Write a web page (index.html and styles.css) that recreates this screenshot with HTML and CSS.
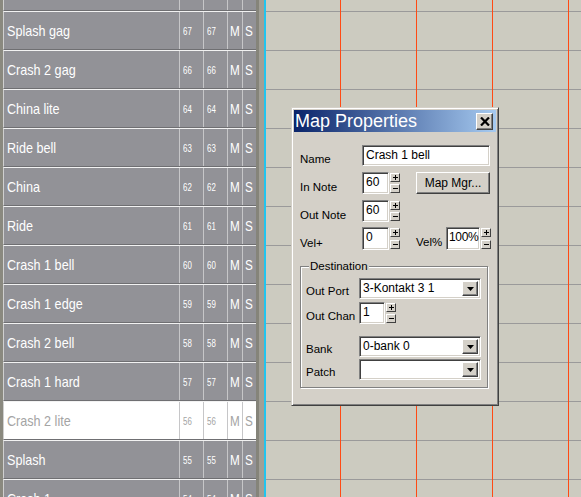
FILE: index.html
```html
<!DOCTYPE html>
<html>
<head>
<meta charset="utf-8">
<link rel="stylesheet" href="styles.css">
</head>
<body>
<div class="screen">
  <div class="edge"></div>
  <div class="list">
    <div class="row"><span class="c name"></span><span class="c num"></span><span class="c num"></span><span class="c ms"></span><span class="c ms"></span></div>
    <div class="row"><span class="c name"><b class="t">Splash gag</b></span><span class="c num"><b class="t">67</b></span><span class="c num"><b class="t">67</b></span><span class="c ms"><b class="t">M</b></span><span class="c ms"><b class="t">S</b></span></div>
    <div class="row"><span class="c name"><b class="t">Crash 2 gag</b></span><span class="c num"><b class="t">66</b></span><span class="c num"><b class="t">66</b></span><span class="c ms"><b class="t">M</b></span><span class="c ms"><b class="t">S</b></span></div>
    <div class="row"><span class="c name"><b class="t">China lite</b></span><span class="c num"><b class="t">64</b></span><span class="c num"><b class="t">64</b></span><span class="c ms"><b class="t">M</b></span><span class="c ms"><b class="t">S</b></span></div>
    <div class="row"><span class="c name"><b class="t">Ride bell</b></span><span class="c num"><b class="t">63</b></span><span class="c num"><b class="t">63</b></span><span class="c ms"><b class="t">M</b></span><span class="c ms"><b class="t">S</b></span></div>
    <div class="row"><span class="c name"><b class="t">China</b></span><span class="c num"><b class="t">62</b></span><span class="c num"><b class="t">62</b></span><span class="c ms"><b class="t">M</b></span><span class="c ms"><b class="t">S</b></span></div>
    <div class="row"><span class="c name"><b class="t">Ride</b></span><span class="c num"><b class="t">61</b></span><span class="c num"><b class="t">61</b></span><span class="c ms"><b class="t">M</b></span><span class="c ms"><b class="t">S</b></span></div>
    <div class="row"><span class="c name"><b class="t">Crash 1 bell</b></span><span class="c num"><b class="t">60</b></span><span class="c num"><b class="t">60</b></span><span class="c ms"><b class="t">M</b></span><span class="c ms"><b class="t">S</b></span></div>
    <div class="row"><span class="c name"><b class="t">Crash 1 edge</b></span><span class="c num"><b class="t">59</b></span><span class="c num"><b class="t">59</b></span><span class="c ms"><b class="t">M</b></span><span class="c ms"><b class="t">S</b></span></div>
    <div class="row"><span class="c name"><b class="t">Crash 2 bell</b></span><span class="c num"><b class="t">58</b></span><span class="c num"><b class="t">58</b></span><span class="c ms"><b class="t">M</b></span><span class="c ms"><b class="t">S</b></span></div>
    <div class="row"><span class="c name"><b class="t">Crash 1 hard</b></span><span class="c num"><b class="t">57</b></span><span class="c num"><b class="t">57</b></span><span class="c ms"><b class="t">M</b></span><span class="c ms"><b class="t">S</b></span></div>
    <div class="row selected"><span class="c name"><b class="t">Crash 2 lite</b></span><span class="c num"><b class="t">56</b></span><span class="c num"><b class="t">56</b></span><span class="c ms"><b class="t">M</b></span><span class="c ms"><b class="t">S</b></span></div>
    <div class="row"><span class="c name"><b class="t">Splash</b></span><span class="c num"><b class="t">55</b></span><span class="c num"><b class="t">55</b></span><span class="c ms"><b class="t">M</b></span><span class="c ms"><b class="t">S</b></span></div>
    <div class="row"><span class="c name"><b class="t">Crash 1</b></span><span class="c num"><b class="t">54</b></span><span class="c num"><b class="t">54</b></span><span class="c ms"><b class="t">M</b></span><span class="c ms"><b class="t">S</b></span></div>
  </div>
  <div class="divider"><i class="d1"></i><i class="d2"></i><i class="d3"></i></div>
  <div class="canvas">
    <div class="dialog">
      <div class="titlebar">
        <span class="title">Map Properties</span>
        <span class="close"><svg width="10" height="9" viewBox="0 0 10 9"><path d="M1 0.5 L9 8.5 M9 0.5 L1 8.5" stroke="#000" stroke-width="2.2"/></svg></span>
      </div>
      <div class="body">
        <div class="frow r-name">
          <span class="lbl">Name</span>
          <span class="field f-name">Crash 1 bell</span>
        </div>
        <div class="frow r-note">
          <span class="lbl">In Note</span>
          <span class="field f-num">60</span>
          <span class="spin"><i class="sb"><svg width="5" height="5" viewBox="0 0 5 5"><path d="M0 2.5H5M2.5 0V5" stroke="#000" stroke-width="1"/></svg></i><i class="sb"><svg width="5" height="1" viewBox="0 0 5 1"><path d="M0 0.5H5" stroke="#000" stroke-width="1"/></svg></i></span>
          <span class="btn mapmgr">Map Mgr...</span>
        </div>
        <div class="frow r-note">
          <span class="lbl">Out Note</span>
          <span class="field f-num">60</span>
          <span class="spin"><i class="sb"><svg width="5" height="5" viewBox="0 0 5 5"><path d="M0 2.5H5M2.5 0V5" stroke="#000" stroke-width="1"/></svg></i><i class="sb"><svg width="5" height="1" viewBox="0 0 5 1"><path d="M0 0.5H5" stroke="#000" stroke-width="1"/></svg></i></span>
        </div>
        <div class="frow r-vel">
          <span class="lbl">Vel+</span>
          <span class="field f-num">0</span>
          <span class="spin"><i class="sb"><svg width="5" height="5" viewBox="0 0 5 5"><path d="M0 2.5H5M2.5 0V5" stroke="#000" stroke-width="1"/></svg></i><i class="sb"><svg width="5" height="1" viewBox="0 0 5 1"><path d="M0 0.5H5" stroke="#000" stroke-width="1"/></svg></i></span>
          <span class="lbl lbl-velp">Vel%</span>
          <span class="field f-pct">100%</span>
          <span class="spin"><i class="sb"><svg width="5" height="5" viewBox="0 0 5 5"><path d="M0 2.5H5M2.5 0V5" stroke="#000" stroke-width="1"/></svg></i><i class="sb"><svg width="5" height="1" viewBox="0 0 5 1"><path d="M0 0.5H5" stroke="#000" stroke-width="1"/></svg></i></span>
        </div>
        <div class="group">
          <span class="legend">Destination</span>
          <div class="grow g-port">
            <span class="glbl">Out Port</span>
            <span class="field combo">3-Kontakt 3 1<i class="drop"><svg width="7" height="4" viewBox="0 0 7 4"><path d="M0 0H7L3.5 4Z" fill="#000"/></svg></i></span>
          </div>
          <div class="grow g-chan">
            <span class="glbl">Out Chan</span>
            <span class="field f-chan">1</span>
            <span class="spin"><i class="sb"><svg width="5" height="5" viewBox="0 0 5 5"><path d="M0 2.5H5M2.5 0V5" stroke="#000" stroke-width="1"/></svg></i><i class="sb"><svg width="5" height="1" viewBox="0 0 5 1"><path d="M0 0.5H5" stroke="#000" stroke-width="1"/></svg></i></span>
          </div>
          <div class="grow g-bank">
            <span class="glbl">Bank</span>
            <span class="field combo">0-bank 0<i class="drop"><svg width="7" height="4" viewBox="0 0 7 4"><path d="M0 0H7L3.5 4Z" fill="#000"/></svg></i></span>
          </div>
          <div class="grow g-patch">
            <span class="glbl">Patch</span>
            <span class="field combo"><i class="drop"><svg width="7" height="4" viewBox="0 0 7 4"><path d="M0 0H7L3.5 4Z" fill="#000"/></svg></i></span>
          </div>
        </div>
      </div>
    </div>
  </div>
</div>
</body>
</html>
```
FILE: styles.css
```css
html, body {
  margin: 0;
  padding: 0;
  width: 581px;
  height: 497px;
  overflow: hidden;
  background: #cccbc0;
}
.screen {
  display: flex;
  width: 581px;
  height: 497px;
  overflow: hidden;
  font-family: "Liberation Sans", Arial, sans-serif;
}
.edge {
  width: 3px;
  flex: none;
  background: #8a897f;
}
.list {
  width: 253px;
  flex: none;
  display: flex;
  flex-direction: column;
  margin-top: -28px;
}
.row {
  display: grid;
  grid-template-columns: 175px 24px 24px 15px 14px;
  height: 39px;
  flex: none;
  box-sizing: border-box;
  border-top: 1px solid #f2f2f2;
  border-bottom: 1px solid #6f6f72;
  border-left: 1px solid #cfcfcf;
  background: #929297;
  color: #fff;
}
.row.selected {
  background: #fff;
  color: #a4a4a4;
}
.c {
  display: flex;
  align-items: center;
  white-space: nowrap;
  overflow: hidden;
}
.c + .c {
  border-left: 1px solid #c6c6c8;
}
.t {
  display: inline-block;
  font-weight: normal;
  transform: scaleX(0.84);
  transform-origin: 0 50%;
}
.name {
  padding-left: 3px;
  font-size: 15px;
}
.num {
  padding-left: 3px;
  font-size: 11px;
}
.num .t { transform: scaleX(0.72); }
.ms {
  padding-left: 2px;
  font-size: 15px;
}
.ms .t { transform: scaleX(0.78); }
.divider {
  display: flex;
  flex: none;
}
.divider i { display: block; height: 100%; }
.d1 { width: 3px; background: #85847a; }
.d2 { width: 5px; background: #a19f96; }
.d3 { width: 2px; background: #20c4ef; }
.canvas {
  position: relative;
  flex: 1;
  background-color: #cccbc0;
  background-image:
    repeating-linear-gradient(to right, transparent 0 74px, #ff4a14 74px 75px, transparent 75px 76px),
    repeating-linear-gradient(to bottom, transparent 0 11px, #9a9a9a 11px 12px, transparent 12px 39px);
}
.dialog {
  position: absolute;
  left: 25px;
  top: 107px;
  width: 208px;
  height: 299px;
  box-sizing: border-box;
  background: #d4d0c8;
  border: 1px solid;
  border-color: #d4d0c8 #404040 #404040 #d4d0c8;
  box-shadow: inset 1px 1px #fff, inset -1px -1px #808080;
  padding: 2px;
  font-size: 11px;
  color: #000;
}
.titlebar {
  display: flex;
  align-items: center;
  justify-content: space-between;
  height: 22px;
  padding: 0 3px 0 1px;
  background: linear-gradient(to right, #0a246a, #a6caf0);
}
.title {
  font-size: 18px;
  color: #fff;
  line-height: 22px;
}
.close {
  width: 17px;
  height: 17px;
  box-sizing: border-box;
  display: flex;
  align-items: center;
  justify-content: center;
  background: #d4d0c8;
  border: 1px solid;
  border-color: #fff #404040 #404040 #fff;
  box-shadow: inset -1px -1px #808080;
}
.body {
  padding: 13px 0 0 6px;
  display: flex;
  flex-direction: column;
}
.frow {
  display: flex;
  align-items: flex-end;
}
.r-name { height: 21px; }
.r-note { height: 22px; margin-top: 6px; }
.r-vel { height: 23px; margin-top: 5px; }
.lbl {
  width: 62px;
  flex: none;
  padding-bottom: 0;
  line-height: 13px;
  font-size: 11.5px;
}
.field {
  position: relative;
  display: block;
  box-sizing: border-box;
  height: 100%;
  background: #fff;
  border: 1px solid;
  border-color: #808080 #fff #fff #808080;
  box-shadow: inset 1px 1px #404040, inset -1px -1px #d4d0c8;
  padding: 2px 0 0 3px;
  font-size: 12px;
  line-height: 15px;
  white-space: nowrap;
}
.f-name { width: 128px; }
.f-num { width: 27px; }
.f-pct { width: 34px; padding-left: 2px; letter-spacing: -0.3px; }
.spin {
  width: 10px;
  height: 100%;
  margin-left: 1px;
  display: flex;
  flex-direction: column;
  justify-content: space-between;
  padding: 1px 0;
  box-sizing: border-box;
}
.sb {
  display: flex;
  align-items: center;
  justify-content: center;
  height: 9px;
  box-sizing: border-box;
  background: #d4d0c8;
  border: 1px solid;
  border-color: #fff #404040 #404040 #fff;
}
.btn {
  display: flex;
  align-items: center;
  justify-content: center;
  box-sizing: border-box;
  height: 100%;
  background: #d4d0c8;
  border: 1px solid;
  border-color: #fff #404040 #404040 #fff;
  box-shadow: inset -1px -1px #808080;
  font-size: 12px;
}
.mapmgr {
  width: 74px;
  margin-left: 16px;
}
.lbl-velp {
  width: 30px;
  margin-left: 16px;
  padding-bottom: 1px;
}
.group {
  position: relative;
  width: 188px;
  margin-top: 16px;
  box-sizing: border-box;
  border: 1px solid #808080;
  box-shadow: inset 1px 1px #fff, 1px 1px #fff;
  padding: 11px 0 7px 5px;
  display: flex;
  flex-direction: column;
}
.legend {
  position: absolute;
  left: 8px;
  top: -8px;
  padding: 0 1px;
  background: #d4d0c8;
  line-height: 14px;
  font-size: 11.5px;
}
.grow {
  display: flex;
  align-items: flex-end;
}
.g-port { height: 21px; }
.g-chan { height: 22px; margin-top: 3px; }
.g-bank { height: 21px; margin-top: 12px; }
.g-patch { height: 21px; margin-top: 2px; }
.glbl {
  width: 53px;
  flex: none;
  padding-bottom: 1px;
  line-height: 13px;
  font-size: 11.5px;
}
.combo { width: 122px; }
.f-chan { width: 26px; }
.drop {
  position: absolute;
  right: 2px;
  top: 2px;
  bottom: 2px;
  width: 16px;
  box-sizing: border-box;
  display: flex;
  align-items: center;
  justify-content: center;
  background: #d4d0c8;
  border: 1px solid;
  border-color: #fff #404040 #404040 #fff;
  box-shadow: inset -1px -1px #808080;
}
```
